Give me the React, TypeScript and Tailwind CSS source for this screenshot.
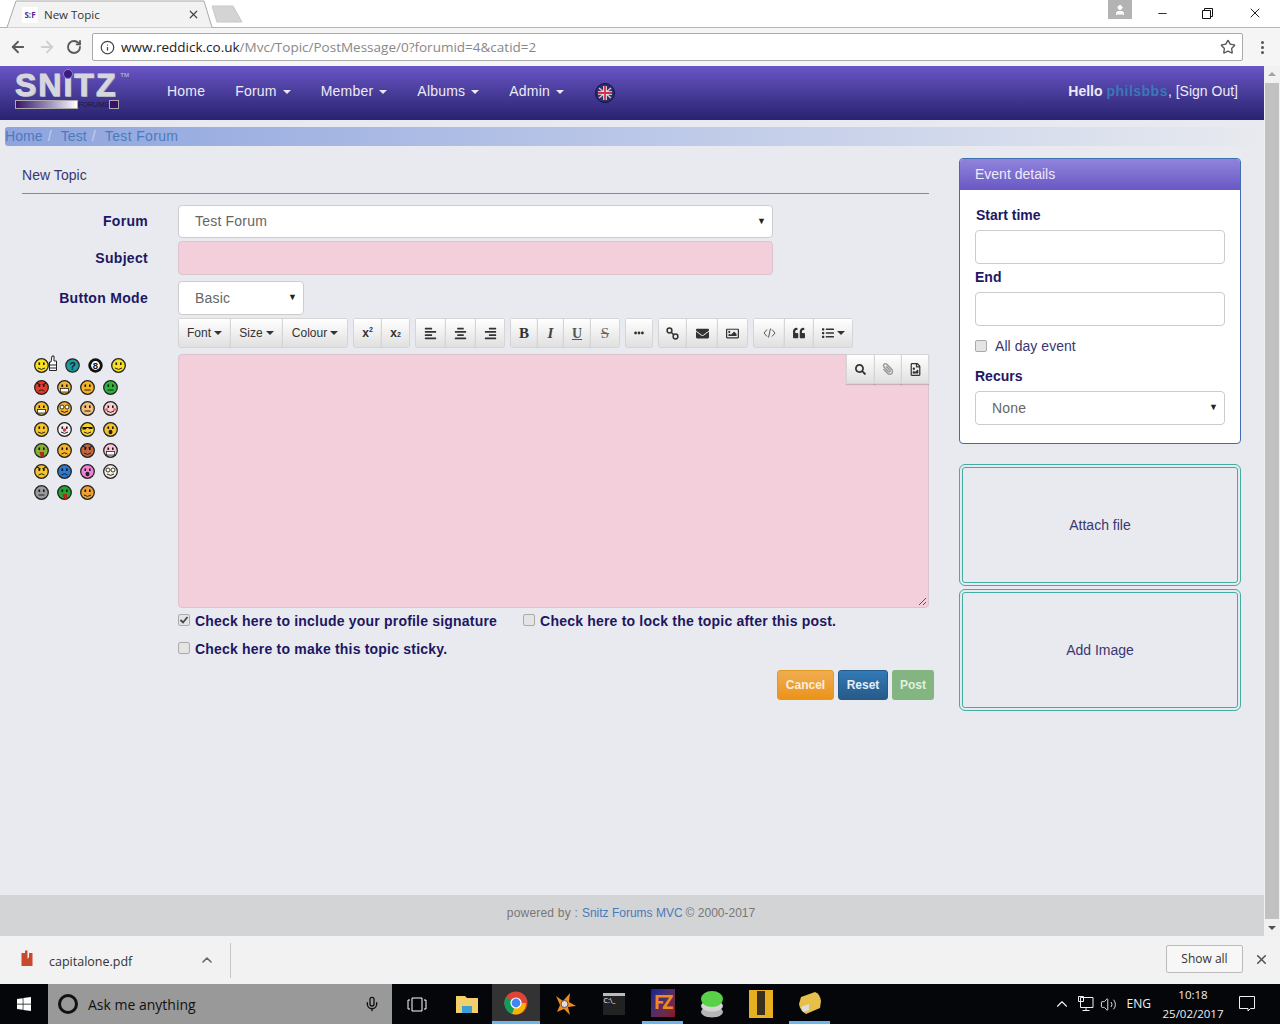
import React from "react";
import {
  FaAlignCenter, FaAlignLeft, FaAlignRight, FaEllipsisH, FaEnvelope, FaList, FaPaperclip, FaQuoteLeft,
  FaRegFileImage, FaRegImage, FaSearch, FaWindows,
} from "react-icons/fa";
import { ArrowLeft, ArrowRight, ChevronUp, Info, Mic, Minus, RotateCw, Star, User, Volume2, X } from "lucide-react";

const Caret = ({ className = "border-t-[#333]" }: { className?: string }) => (
  <span className={"inline-block w-0 h-0 ml-1 align-middle border-x-[4px] border-x-transparent border-t-[4px] " + className} />
);

const Tool: React.FC<{ w: number; children: React.ReactNode; first?: boolean; className?: string }> = ({ w, children, first, className }) => (
  <div
    style={{ width: w }}
    className={
      "h-[30px] flex items-center justify-center text-[12px] text-[#333] bg-gradient-to-b from-white to-[#e0e0e0] border border-[#d5d5d5] shadow-[0_1px_1px_rgba(0,0,0,0.15)] " +
      (first ? "" : "-ml-px ") +
      (className || "")
    }
  >
    {children}
  </div>
);

const Group: React.FC<{ children: React.ReactNode }> = ({ children }) => (
  <div className="flex rounded-[3px] overflow-hidden">{children}</div>
);

const FakeSelect: React.FC<{ value: string; className: string }> = ({ value, className }) => (
  <div className={"flex items-center justify-between bg-white border border-[#ccc] rounded-[4px] pl-4 pr-[6px] text-[14px] text-[#666] tracking-[0.2px] " + className}>
    <span>{value}</span>
    <span className="text-[9px] text-[#222]">▼</span>
  </div>
);

const Check: React.FC<{ checked?: boolean }> = ({ checked }) => (
  <span className="w-[12px] h-[12px] shrink-0 rounded-[2px] border border-[#aaa] bg-[#e4e4e4] flex items-center justify-center">
    {checked && (
      <svg width="10" height="10" viewBox="0 0 10 10">
        <path d="M1.5 5 L4 7.5 L8.5 2" fill="none" stroke="#444" strokeWidth="1.8" />
      </svg>
    )}
  </span>
);

type Mouth = "smile" | "flat" | "grin" | "frown" | "tongue" | "o" | "shades" | "angry" | "rings" | "cheeks" | "clown" | "horns";

const Smiley: React.FC<{ fill: string; mouth?: Mouth }> = ({ fill, mouth = "smile" }) => (
  <svg width="15" height="15" viewBox="0 0 15 15" className="shrink-0">
    <circle cx="7.5" cy="7.5" r="6.8" fill={fill} stroke="#222" strokeWidth="1.3" />
    {mouth === "shades" && <path d="M2.5 5 H12.5 V7 H9.5 L8 6 H7 L5.5 7.5 H2.5 Z" fill="#111" />}
    {mouth === "rings" && (
      <>
        <circle cx="5" cy="6" r="2" fill="#fff" stroke="#222" strokeWidth="0.9" />
        <circle cx="10" cy="6" r="2" fill="#fff" stroke="#222" strokeWidth="0.9" />
      </>
    )}
    {mouth !== "shades" && mouth !== "rings" && (
      <>
        <rect x="4.5" y="4.5" width="1.6" height="2.4" fill="#111" />
        <rect x="9" y="4.5" width="1.6" height="2.4" fill="#111" />
      </>
    )}
    {(mouth === "angry" || mouth === "horns") && <path d="M3 3 L6.5 5 M12 3 L8.5 5" stroke="#222" strokeWidth="1.1" />}
    {mouth === "cheeks" && (
      <>
        <circle cx="3.5" cy="8.5" r="1.5" fill="#ee6a6a" />
        <circle cx="11.5" cy="8.5" r="1.5" fill="#ee6a6a" />
      </>
    )}
    {mouth === "clown" && <circle cx="7.5" cy="8" r="1.8" fill="#d8344a" />}
    {(mouth === "smile" || mouth === "shades" || mouth === "horns" || mouth === "cheeks" || mouth === "clown" || mouth === "rings") && (
      <path d="M4 10 Q7.5 12.8 11 10" fill="none" stroke="#222" strokeWidth="1" />
    )}
    {mouth === "flat" && <path d="M4.5 10 H10.5" stroke="#222" strokeWidth="1" />}
    {(mouth === "frown" || mouth === "angry") && <path d="M4.5 11 Q7.5 8.5 10.5 11" fill="none" stroke="#222" strokeWidth="1" />}
    {mouth === "grin" && <rect x="3.5" y="8.5" width="8" height="3.5" fill="#fff" stroke="#222" strokeWidth="0.8" />}
    {mouth === "tongue" && <path d="M5.5 9 H10 V14 H7 Z" fill="#b3261e" />}
    {mouth === "o" && <ellipse cx="7.5" cy="10" rx="2" ry="2.3" fill="#222" />}
  </svg>
);

const smileyRows: [string, Mouth][][] = [
  [["#e83a2b", "angry"], ["#f5b32a", "grin"], ["#f5b32a", "flat"], ["#2bb53a", "flat"]],
  [["#f5c32a", "grin"], ["#f5b32a", "rings"], ["#f3bd7a", "flat"], ["#fbd0d0", "cheeks"]],
  [["#f5c32a", "smile"], ["#f4f0f0", "clown"], ["#f5d32a", "shades"], ["#f5c32a", "o"]],
  [["#86b233", "tongue"], ["#f5b32a", "frown"], ["#c4653a", "horns"], ["#fbc4d8", "grin"]],
  [["#f5c32a", "angry"], ["#2a7ad0", "frown"], ["#f080d8", "o"], ["#f8f0dc", "rings"]],
  [["#999", "flat"], ["#22a52f", "tongue"], ["#f0a030", "smile"]],
];

const SmileyPanel = () => (
  <div className="w-[144px] pl-[12px] pt-[4px] flex flex-col gap-[6px]">
    <div className="flex items-center h-[15px] mb-px">
      <Smiley fill="#f8e020" />
      <svg width="8" height="17" viewBox="0 0 8 17" className="shrink-0 mr-[8px] -mt-[5px]">
        <path d="M2 7 L3 1 H5 V6 H7.5 V15.5 H0.5 V7 Z M0.5 10 H7.5 M0.5 13 H7.5" fill="#fff" stroke="#222" />
      </svg>
      <svg width="15" height="15" viewBox="0 0 15 15" className="shrink-0 mr-[8px]">
        <circle cx="7.5" cy="7.5" r="6.7" fill="#1e9a9a" stroke="#222" strokeWidth="1.2" />
        <text x="7.5" y="11.5" textAnchor="middle" fontSize="11" fontWeight="700" fill="#123">?</text>
      </svg>
      <svg width="15" height="15" viewBox="0 0 15 15" className="shrink-0 mr-[8px]">
        <circle cx="7.5" cy="7.5" r="7.2" fill="#111" />
        <circle cx="7.5" cy="7.5" r="4.4" fill="#fff" />
        <text x="7.5" y="11" textAnchor="middle" fontSize="9.5" fontWeight="700" fill="#111">8</text>
      </svg>
      <Smiley fill="#f8e020" />
    </div>
    {smileyRows.map((row, i) => (
      <div key={i} className="flex gap-[8px] h-[15px]">
        {row.map(([fill, mouth], j) => (
          <Smiley key={j} fill={fill} mouth={mouth} />
        ))}
      </div>
    ))}
  </div>
);

const Label: React.FC<{ children: React.ReactNode }> = ({ children }) => (
  <div className="w-[126px] pr-0 text-right text-[14px] font-bold text-[#1d1763] tracking-[0.3px]">{children}</div>
);

const CheckLabel: React.FC<{ checked?: boolean; children: React.ReactNode }> = ({ checked, children }) => (
  <div className="flex items-start gap-[5px] text-[14px] font-bold text-[#1d1763] tracking-[0.2px] leading-[20px]">
    <span className="pt-[3px]"><Check checked={checked} /></span>
    <span>{children}</span>
  </div>
);

const ChromeLogo = () => (
  <svg width="24" height="24" viewBox="0 0 24 24">
    <circle cx="12" cy="12" r="11.5" fill="#db4437" />
    <path d="M12 12 L22 12 A10.5 11 0 0 1 7 22.5 Z" fill="#f4b400" />
    <path d="M12 12 L8 23 A11.5 11.5 0 0 1 1.8 6.5 Z" fill="#0f9d58" />
    <circle cx="12" cy="12" r="5.6" fill="#fff" />
    <circle cx="12" cy="12" r="4.4" fill="#4285f4" />
  </svg>
);

const Flag = () => (
  <svg width="20" height="20" viewBox="0 0 20 20" className="ml-[31px]">
    <circle cx="10" cy="10" r="9.5" fill="#2a2f6e" stroke="#14123e" />
    <path d="M4 5 L16 15 M16 5 L4 15" stroke="#e8b8c4" strokeWidth="1.6" />
    <path d="M10 3 V17 M3 10 H17" stroke="#eee" strokeWidth="3.6" />
    <path d="M10 3 V17 M3 10 H17" stroke="#d3304a" strokeWidth="1.8" />
  </svg>
);

export default function App() {
  return (
    <div className="w-[1280px] h-[1024px] flex flex-col overflow-hidden bg-white font-['Liberation_Sans',Arial,sans-serif]">
      {/* tab strip */}
      <div className="h-[28px] shrink-0 flex items-end pl-[6px] border-b border-[#b4b4b4] relative bg-white">
        <div className="relative w-[208px] h-[28px] -mb-px">
          <svg width="208" height="28" viewBox="0 0 208 28" className="absolute inset-0">
            <path d="M0 27.5 H1 L10 1 H198 L206 27.5 H208" fill="#f2f2f2" stroke="#a8a8a8" />
          </svg>
          <div className="relative flex items-center h-[28px] pt-px pl-[16px] pr-[14px] font-['Open_Sans',sans-serif] text-[11.5px] text-[#333]">
            <span className="w-[16px] h-[16px] bg-white text-[8px] font-bold text-[#4b2a9a] flex items-center justify-center">S:F</span>
            <span className="ml-[6px] flex-1">New Topic</span>
            <X size={13} strokeWidth={2.2} className="text-[#444]" />
          </div>
        </div>
        <svg width="36" height="20" viewBox="0 0 36 20" className="mb-[3px] -ml-[3px]">
          <path d="M1 2 H22 L31 18 H6 Z" fill="#d4d4d4" stroke="#c8c8c8" strokeLinejoin="round" />
        </svg>
        <div className="flex-1" />
        <div className="self-start w-[24px] h-[19px] bg-[#b3b3b3] flex items-center justify-center mr-[24px]">
          <User size={12} fill="#fff" stroke="#fff" />
        </div>
        <div className="self-start flex items-center h-[26px] text-[#111]">
          <Minus size={13} strokeWidth={1.6} className="mr-[33px]" />
          <svg width="11" height="11" viewBox="0 0 11 11" className="mr-[34px]">
            <path d="M0.5 2.5 H8.5 V10.5 H0.5 Z M2.5 2.5 V0.5 H10.5 V8.5 H8.5" fill="none" stroke="#111" />
          </svg>
          <X size={16} strokeWidth={1.4} className="mr-[17px]" />
        </div>
      </div>

      {/* address bar */}
      <div className="h-[38px] shrink-0 flex items-center bg-[#f5f5f5] pl-[9px] pr-[14px] text-[#555]">
        <ArrowLeft size={18} strokeWidth={2.4} className="text-[#5a5a5a]" />
        <ArrowRight size={18} strokeWidth={2.4} className="ml-[11px] text-[#cfcfcf]" />
        <RotateCw size={16} strokeWidth={2.8} className="ml-[10px] text-[#5a5a5a]" />
        <div className="ml-[10px] w-[1151px] h-[28px] flex items-center bg-white border border-[#aaa] rounded-[2px] pl-[7px] pr-[6px] font-['Open_Sans',sans-serif] text-[13.5px]">
          <Info size={15} className="text-[#444]" />
          <span className="ml-[6px] flex-1 text-[#888] truncate">
            <span className="text-[#222]">www.reddick.co.uk</span>/Mvc/Topic/PostMessage/0?forumid=4&amp;catid=2
          </span>
          <Star size={16} strokeWidth={2} className="text-[#555]" />
        </div>
        <div className="ml-[18px] flex flex-col gap-[2px]">
          <span className="w-[3px] h-[3px] bg-[#555] rounded-full" />
          <span className="w-[3px] h-[3px] bg-[#555] rounded-full" />
          <span className="w-[3px] h-[3px] bg-[#555] rounded-full" />
        </div>
      </div>

      {/* viewport + scrollbar */}
      <div className="h-[870px] shrink-0 flex">
        <div className="w-[1264px] flex flex-col bg-[#e8eaef]">
          {/* navbar */}
          <div className="h-[54px] shrink-0 flex items-center pl-[15px] pr-[26px] bg-gradient-to-b from-[#6a56c6] to-[#29226f] text-[14px] text-[#eceaf6]">
            <div className="w-[152px] shrink-0 self-start pt-[6px]">
              <div className="relative w-[104px] h-[26px]">
                <span className="block text-[32px] leading-[26px] font-bold tracking-[2px] text-[#d6d6de] [-webkit-text-stroke:1px_#d6d6de] [text-shadow:1px_1px_0_#8d8ba8]">SNITZ</span>
                <span className="absolute left-[48px] -top-[3px] w-[10px] h-[10px] rounded-full bg-[#3b1a80] border border-[#8d7fd0]" />
                <span className="absolute -right-[10px] -top-[1px] text-[6px] leading-[8px] text-[#ccc]">TM</span>
              </div>
              <div className="flex items-center h-[9px] mt-[2px] w-[104px]">
                <span className="w-[63px] h-[9px] bg-gradient-to-r from-[#3b1068] to-white border border-[#aaa]" />
                <span className="text-[7px] leading-[9px] text-[#1a1640] flex-1 text-center">FORUMS</span>
                <span className="w-[10px] h-[9px] bg-[#3b1068] border border-[#aaa]" />
              </div>
            </div>
            <div className="flex items-center gap-[30px] mb-[4px] tracking-[0.2px]">
              <span>Home</span>
              <span>Forum <Caret className="border-t-[#eceaf6] ml-[2px]" /></span>
              <span>Member <Caret className="border-t-[#eceaf6] ml-[2px]" /></span>
              <span>Albums <Caret className="border-t-[#eceaf6] ml-[2px]" /></span>
              <span>Admin <Caret className="border-t-[#eceaf6] ml-[2px]" /></span>
            </div>
            <Flag />
            <div className="ml-auto mb-[4px]">
              <span className="font-bold">Hello </span>
              <span className="font-bold text-[#3a78b8] tracking-[0.5px]">philsbbs</span>
              <span>, [Sign Out]</span>
            </div>
          </div>

          {/* breadcrumb */}
          <div className="mt-[7px] ml-[5px] h-[19px] shrink-0 flex items-center rounded-l-[3px] bg-gradient-to-r from-[#8fa4de] to-[#e8eaef] text-[14px] text-[#4a7cbc] tracking-[0.1px]">
            <span>Home</span>
            <span className="ml-[5px] text-[#c4d0ec]">/</span>
            <span className="ml-[9px]">Test</span>
            <span className="ml-[5px] text-[#c4d0ec]">/</span>
            <span className="ml-[9px] tracking-[0.35px]">Test Forum</span>
          </div>

          {/* content */}
          <div className="flex-1 flex items-start pl-[22px]">
            <div className="w-[907px] shrink-0">
              <div className="mt-[19px] h-[29px] text-[14px] text-[#3a3670] tracking-[0.05px] border-b border-[#8a8a8a]">New Topic</div>

              <div className="mt-[11px] flex items-center">
                <Label>Forum</Label>
                <FakeSelect value="Test Forum" className="ml-[30px] w-[595px] h-[33px]" />
              </div>
              <div className="mt-[3px] flex items-center">
                <Label>Subject</Label>
                <div className="ml-[30px] w-[595px] h-[34px] bg-[#f3cfdb] border border-[#dcc4cc] rounded-[4px]" />
              </div>
              <div className="mt-[6px] flex items-center">
                <Label>Button Mode</Label>
                <FakeSelect value="Basic" className="ml-[30px] w-[126px] h-[34px]" />
              </div>

              {/* editor toolbar */}
              <div className="mt-[3px] ml-[156px] flex gap-[5px]">
                <Group>
                  <Tool w={53} first>Font<Caret className="border-t-[#333] ml-[3px]" /></Tool>
                  <Tool w={53}>Size<Caret className="border-t-[#333] ml-[3px]" /></Tool>
                  <Tool w={66}>Colour<Caret className="border-t-[#333] ml-[3px]" /></Tool>
                </Group>
                <Group>
                  <Tool w={29} first className="font-bold text-[11px]">x<sup className="text-[7px]">2</sup></Tool>
                  <Tool w={29} className="font-bold text-[11px]">x<sub className="text-[7px]">2</sub></Tool>
                </Group>
                <Group>
                  <Tool w={31} first><FaAlignLeft size={13} /></Tool>
                  <Tool w={31}><FaAlignCenter size={13} /></Tool>
                  <Tool w={30}><FaAlignRight size={13} /></Tool>
                </Group>
                <Group>
                  <Tool w={28} first className="font-['Liberation_Serif',serif] text-[15px] font-bold">B</Tool>
                  <Tool w={27} className="font-['Liberation_Serif',serif] text-[15px] italic font-bold text-[#444]">I</Tool>
                  <Tool w={28} className="font-['Liberation_Serif',serif] text-[14px] underline text-[#555] font-bold">U</Tool>
                  <Tool w={30} className="font-['Liberation_Serif',serif] text-[15px] line-through text-[#666]">S</Tool>
                </Group>
                <Group>
                  <Tool w={28} first><FaEllipsisH size={10} /></Tool>
                </Group>
                <Group>
                  <Tool w={29} first>
                    <svg width="13" height="13" viewBox="0 0 13 13">
                      <circle cx="3.5" cy="3.5" r="2.4" fill="none" stroke="#333" strokeWidth="1.5" />
                      <circle cx="9.5" cy="9.5" r="2.4" fill="none" stroke="#333" strokeWidth="1.5" />
                      <path d="M5 5 L8 8" stroke="#333" strokeWidth="1.5" />
                    </svg>
                  </Tool>
                  <Tool w={32}><FaEnvelope size={13} /></Tool>
                  <Tool w={31}><FaRegImage size={13} /></Tool>
                </Group>
                <Group>
                  <Tool w={32} first>
                    <svg width="13" height="10" viewBox="0 0 13 10">
                      <path d="M4 1.5 L1 5 L4 8.5 M9 1.5 L12 5 L9 8.5 M7.5 0.5 L5.5 9.5" fill="none" stroke="#555" />
                    </svg>
                  </Tool>
                  <Tool w={30}><FaQuoteLeft size={12} /></Tool>
                  <Tool w={40}><FaList size={12} /><Caret className="border-t-[#333] ml-[3px]" /></Tool>
                </Group>
              </div>

              {/* smileys + message box */}
              <div className="mt-[6px] flex items-start">
                <div className="w-[156px] shrink-0"><SmileyPanel /></div>
                <div className="flex-1 relative h-[254px] bg-[#f3cfdb] border border-[#dcc4cc] rounded-[4px]">
                  <div className="absolute -top-px -right-px flex">
                    <Tool w={29} first><FaSearch size={11} /></Tool>
                    <Tool w={28}><FaPaperclip size={12} className="text-[#999] -scale-x-100" /></Tool>
                    <Tool w={28}><FaRegFileImage size={13} /></Tool>
                  </div>
                  <svg width="9" height="9" viewBox="0 0 9 9" className="absolute right-px bottom-px">
                    <path d="M8 1 L1 8 M8 5 L5 8" stroke="#555" />
                  </svg>
                </div>
              </div>

              <div className="ml-[156px] mt-[3px] flex gap-[26px]">
                <CheckLabel checked>Check here to include your profile signature</CheckLabel>
                <CheckLabel>Check here to lock the topic after this post.</CheckLabel>
              </div>
              <div className="ml-[156px] mt-[8px]">
                <CheckLabel>Check here to make this topic sticky.</CheckLabel>
              </div>

              <div className="mt-[11px] -mr-[5px] flex justify-end gap-[4px] text-[12px] font-bold">
                <span className="w-[57px] h-[30px] flex items-center justify-center text-[#fbeedd] rounded-[3px] border border-[#e09a25] bg-gradient-to-b from-[#f0ad4e] to-[#eb9316]">Cancel</span>
                <span className="w-[50px] h-[30px] flex items-center justify-center text-[#e6eef6] rounded-[3px] border border-[#265a88] bg-gradient-to-b from-[#337ab7] to-[#265a88]">Reset</span>
                <span className="w-[42px] h-[30px] flex items-center justify-center text-[#e2f0e2] rounded-[3px] bg-[#82b57f]">Post</span>
              </div>
            </div>

            {/* right column */}
            <div className="ml-[30px] w-[282px] shrink-0 flex flex-col">
              <div className="mt-[12px] h-[286px] rounded-[4px] border border-[#3d6fb0] bg-white overflow-hidden">
                <div className="h-[31px] flex items-center px-[15px] text-[14px] text-[#eeeaf8] bg-gradient-to-b from-[#9184dc] to-[#6a57c4]">Event details</div>
                <div className="px-[15px] pt-[17px] text-[14px] text-[#1d1763]">
                  <div className="font-bold leading-[16px] pl-px">Start time</div>
                  <div className="mt-[7px] h-[34px] w-[250px] border border-[#ccc] rounded-[4px]" />
                  <div className="mt-[5px] font-bold leading-[16px]">End</div>
                  <div className="mt-[7px] h-[34px] w-[250px] border border-[#ccc] rounded-[4px]" />
                  <div className="mt-[12px] flex items-center gap-[8px] h-[16px] text-[#3a3670] tracking-[0.05px]">
                    <Check />
                    <span>All day event</span>
                  </div>
                  <div className="mt-[14px] font-bold leading-[16px]">Recurs</div>
                  <FakeSelect value="None" className="mt-[7px] w-[250px] h-[34px]" />
                </div>
              </div>
              <div className="mt-[20px] h-[122px] rounded-[6px] border-[4px] border-double border-[#42ada3] flex items-center justify-center text-[14px] text-[#3a3670]">Attach file</div>
              <div className="mt-[3px] h-[122px] rounded-[6px] border-[4px] border-double border-[#42ada3] flex items-center justify-center text-[14px] text-[#3a3670]">Add Image</div>
            </div>
          </div>

          {/* page footer */}
          <div className="h-[41px] shrink-0 pb-[6px] pr-[2px] bg-[#d3d4d6] flex items-center justify-center text-[12px] text-[#777]">
            <span className="tracking-[0.2px]">powered by :</span>
            <span className="ml-[4px] text-[#4a7ab8]">Snitz Forums MVC</span>
            <span className="ml-[3px]">© 2000-2017</span>
          </div>
        </div>

        {/* scrollbar */}
        <div className="w-[16px] shrink-0 flex flex-col items-center bg-[#f1f1f1]">
          <span className="mt-[6px] w-0 h-0 border-x-[4px] border-x-transparent border-b-[4px] border-b-[#a3a3a3]" />
          <span className="mt-[7px] w-[14px] flex-1 bg-[#c1c1c1]" />
          <span className="mt-[7px] mb-[6px] w-0 h-0 border-x-[4px] border-x-transparent border-t-[4px] border-t-[#505050]" />
        </div>
      </div>

      {/* downloads bar */}
      <div className="h-[48px] shrink-0 flex items-center bg-[#f2f2f2] font-['Open_Sans',sans-serif] text-[#333]">
        <svg width="12" height="17" viewBox="0 0 12 17" className="ml-[21px] mb-[4px]">
          <path d="M0.5 3 H4 V0.5 H6.5 V9 L8 7 V3 H11.5 V16 H0.5 Z" fill="#c8492c" />
        </svg>
        <span className="ml-[16px] mt-[4px] text-[12.5px]">capitalone.pdf</span>
        <ChevronUp size={16} strokeWidth={2.4} className="ml-[67px] text-[#666]" />
        <span className="ml-[15px] w-px h-[35px] bg-[#c6c6c6]" />
        <div className="ml-auto mb-[2px] w-[77px] h-[28px] flex items-center justify-center bg-[#f7f7f7] border border-[#bbb] rounded-[2px] text-[12px]">Show all</div>
        <X size={15} strokeWidth={2.6} className="ml-[11px] mr-[11px] mb-[2px] text-[#555]" />
      </div>

      {/* taskbar */}
      <div className="h-[40px] shrink-0 flex items-stretch bg-[#05060a] font-['Open_Sans',sans-serif] text-white">
        <div className="w-[48px] flex items-center justify-center"><FaWindows size={16} /></div>
        <div className="w-[344px] flex items-center bg-[#999] text-[#111] text-[14px] pl-[10px]">
          <span className="w-[20px] h-[20px] rounded-full border-[3px] border-[#111]" />
          <span className="ml-[10px] flex-1">Ask me anything</span>
          <Mic size={16} className="mr-[12px]" />
        </div>
        <div className="w-[49px] flex items-center justify-center">
          <svg width="20" height="15" viewBox="0 0 20 15">
            <path d="M5 1 H15 V14 H5 Z M3 3 H1 V12 H3 M17 3 H19 V12 H17" fill="none" stroke="#fff" />
          </svg>
        </div>
        <div className="w-[51px] flex items-center justify-center">
          <svg width="22" height="18" viewBox="0 0 22 18">
            <path d="M0 1 H9 L11 3 H22 V18 H0 Z" fill="#f1cf6b" />
            <path d="M6 11 H16 V18 H6 Z" fill="#3a9fd8" />
          </svg>
        </div>
        <div className="w-[48px] flex items-center justify-center bg-[#333] border-b-[3px] border-[#6cb4ea]"><ChromeLogo /></div>
        <div className="w-[49px] flex items-center justify-center">
          <svg width="24" height="24" viewBox="0 0 24 24">
            <path d="M3 4 L10 9 L17 1 L16 10 L23 14 L15 15 L17 23 L11 17 L4 20 L7 13 Z" fill="#f08a1d" />
            <circle cx="11.5" cy="12" r="3.5" fill="#ddd" stroke="#555" />
          </svg>
        </div>
        <div className="w-[49px] flex items-center justify-center">
          <span className="w-[22px] h-[22px] bg-[#222] border-t-[3px] border-[#bbb] text-[7px] leading-[10px] pl-px">C:\_</span>
        </div>
        <div className="w-[41px] mx-[4px] flex items-center justify-center border-b-[3px] border-[#6cb4ea]">
          <span className="w-[24px] h-[28px] flex items-center justify-center bg-gradient-to-br from-[#1a1a9a] to-[#8a1020] text-[#f08a1d] text-[19px] font-bold tracking-[-2px]">FZ</span>
        </div>
        <div className="w-[49px] flex items-center justify-center">
          <svg width="24" height="28" viewBox="0 0 24 28">
            <ellipse cx="12" cy="22" rx="11" ry="5.5" fill="#b5b5b5" />
            <ellipse cx="12" cy="16" rx="11" ry="5.5" fill="#d5d5d5" />
            <ellipse cx="12" cy="9" rx="11" ry="8" fill="#58d048" />
          </svg>
        </div>
        <div className="w-[49px] flex items-center justify-center">
          <span className="w-[24px] h-[28px] flex justify-center bg-[#e8b020]"><span className="w-[8px] h-[24px] mt-px bg-[#3a3020]" /></span>
        </div>
        <div className="w-[41px] mx-[4px] flex items-center justify-center border-b-[3px] border-[#6cb4ea]">
          <svg width="24" height="24" viewBox="0 0 24 24">
            <path d="M3 6 L17 1 Q22 3 23 10 L22 17 L8 23 Q2 20 1 13 Z" fill="#e6c04a" />
            <path d="M3 16 L11 13 L11 19 L5 21 Z" fill="#ddd" />
          </svg>
        </div>
        <div className="flex-1 flex items-center justify-end text-[#f0f0f0]">
          <ChevronUp size={18} strokeWidth={1.5} className="mr-[7px]" />
          <svg width="16" height="16" viewBox="0 0 16 16" className="mr-[6px]">
            <path d="M2.5 1.5 H15 V11.5 H2.5 Z M8 11.5 V14.5 M4.5 14.5 H11.5 M0.5 0.5 H5.5 V5.5 H0.5 Z" fill="#05060a" stroke="#f0f0f0" />
          </svg>
          <Volume2 size={17} strokeWidth={1.3} />
          <span className="ml-[10px] text-[12px]">ENG</span>
          <div className="ml-[12px] w-[60px] flex flex-col items-center text-[11.5px] leading-[19px]">
            <span>10:18</span>
            <span>25/02/2017</span>
          </div>
          <svg width="16" height="16" viewBox="0 0 16 16" className="ml-[16px] mr-[25px]">
            <path d="M0.5 0.5 H15.5 V12.5 H11.5 L9 15 V12.5 H0.5 Z" fill="none" stroke="#f0f0f0" />
          </svg>
        </div>
      </div>
    </div>
  );
}
